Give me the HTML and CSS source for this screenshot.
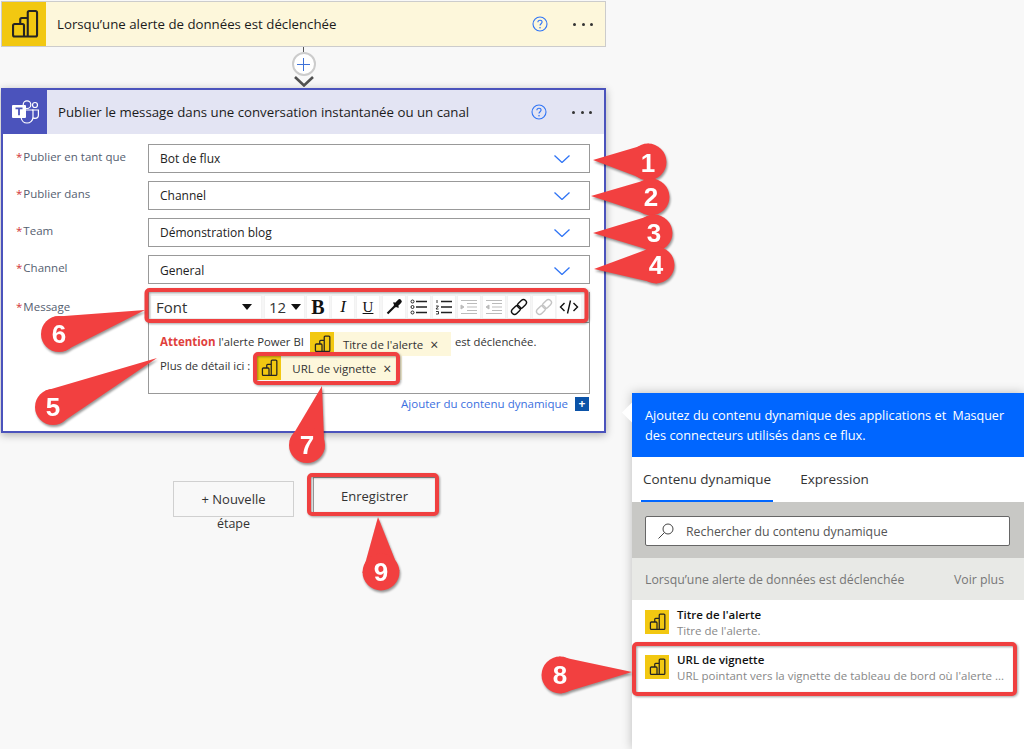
FILE: index.html
```html
<!DOCTYPE html>
<html lang="fr">
<head>
    <meta charset="UTF-8">
    <title>Flux</title>
    <link rel="stylesheet" href="styles.css">
</head>
<body>
<svg class="defs" width="0" height="0">
    <symbol id="pbi" viewBox="2 2 20 20">
        <path d="M12 20.300V13a1 1 0 0 0-1-1H5.700a1 1 0 0 0-1 1v6.300a1 1 0 0 0 1 1h14a1 1 0 0 0 1-1V4.300a1 1 0 0 0-1-1h-4.200a1 1 0 0 0-1 1V20.300M14.500 8H10.500a1 1 0 0 0-1 1V12" fill="none" stroke="#252423" stroke-width="1.400"/>
    </symbol>
    <symbol id="chev" viewBox="0 0 16 8">
        <path d="M.5.5 8 7.500 15.500.5" fill="none" stroke="#2f74f5" stroke-width="1.300"/>
    </symbol>
    <symbol id="help" viewBox="0 0 16 16">
        <circle cx="8" cy="8" r="7" fill="none" stroke="#2f74f5" stroke-width="1.100"/>
        <path d="M5.900 6.200c0-1.300 1-2 2.100-2s2.100.8 2.100 1.900c0 1.700-2.100 1.700-2.100 3.500" fill="none" stroke="#2f74f5" stroke-width="1.100"/>
        <circle cx="8" cy="11.700" r=".8" fill="#2f74f5"/>
    </symbol>
    <symbol id="chain" viewBox="0 0 18 18">
        <rect x="1" y="9" width="10" height="6" rx="3" transform="rotate(-45 6 12)"/>
        <rect x="7" y="3" width="10" height="6" rx="3" transform="rotate(-45 12 6)"/>
    </symbol>
</svg>

<div class="page">
    <!--colonne du flux-->
    <div class="flow">
        <div class="card trigger">
            <div class="card-icon"><svg class="icon-30"><use href="#pbi"/></svg></div>
            <div class="card-title">Lorsqu’une alerte de données est déclenchée</div>
            <svg class="help"><use href="#help"/></svg>
            <div class="dots"><i></i><i></i><i></i></div>
        </div>

        <div class="connector">
            <div class="line"></div>
            <div class="plus">
                <svg width="13" height="13" viewBox="0 0 13 13"><path d="M6.500 0v13M0 6.500h13" stroke="#3f72d8" stroke-width="1"/></svg>
            </div>
            <svg class="arrow" width="20" height="11" viewBox="0 0 20 11"><path d="M1 1l9 8.500L19 1" fill="none" stroke="#505050" stroke-width="2.600"/></svg>
        </div>

        <div class="card action">
            <div class="action-head">
                <div class="card-icon teams">
                    <svg width="30" height="28" viewBox="0 0 30 28" fill="none" stroke="#fff" stroke-width="1.200">
                        <circle cx="17" cy="6.700" r="3.800"/>
                        <circle cx="25" cy="7" r="2.500"/>
                        <path d="M22 12h6.400v5c0 2-1.400 3.400-3.400 3.400-.8 0-1.400-.2-2-.5"/>
                        <path d="M15 12h8v7c0 3.500-2.700 6-6 6-3 0-5.200-2-5.800-5"/>
                        <rect x="2" y="7" width="14" height="13" rx="1" fill="#fff" stroke="none"/>
                        <path d="M5.500 10.300h7M9 10.300v7" stroke="#4b53bc" stroke-width="1.800"/>
                    </svg>
                </div>
                <div class="card-title">Publier le message dans une conversation instantanée ou un canal</div>
                <svg class="help"><use href="#help"/></svg>
                <div class="dots"><i></i><i></i><i></i></div>
            </div>

            <div class="action-body">
                <div class="field">
                    <label class="field-label"><span>*</span>Publier en tant que</label>
                    <div class="select">Bot de flux<svg class="chev"><use href="#chev"/></svg></div>
                </div>
                <div class="field">
                    <label class="field-label"><span>*</span>Publier dans</label>
                    <div class="select">Channel<svg class="chev"><use href="#chev"/></svg></div>
                </div>
                <div class="field">
                    <label class="field-label"><span>*</span>Team</label>
                    <div class="select">Démonstration blog<svg class="chev"><use href="#chev"/></svg></div>
                </div>
                <div class="field">
                    <label class="field-label"><span>*</span>Channel</label>
                    <div class="select">General<svg class="chev"><use href="#chev"/></svg></div>
                </div>

                <div class="field field-message">
                    <label class="field-label"><span>*</span>Message</label>
                    <div class="rich">
                        <div class="toolbar">
                            <div class="tool tool-font">Font<b class="caret"></b></div>
                            <div class="tool tool-size">12<b class="caret"></b></div>
                            <div class="tool tool-b">B</div>
                            <div class="tool tool-i">I</div>
                            <div class="tool tool-u">U</div>
                            <div class="tool tool-dropper">
                                <svg width="18" height="18" viewBox="0 0 18 18" fill="none" stroke="#111"><path d="M2.500 15.500L10 8" stroke-width="2.200"/><path d="M11 7l3.500-3.500" stroke-width="4.500" stroke-linecap="round"/><path d="M8.500 4.500l5 5" stroke-width="1.600"/></svg>
                            </div>
                            <div class="tool">
                                <svg width="18" height="16" viewBox="0 0 18 16" fill="none" stroke="#222"><circle cx="2.500" cy="2.500" r="1.500"/><circle cx="2.500" cy="8" r="1.500"/><circle cx="2.500" cy="13.500" r="1.500"/><path d="M6 2.500h11M6 8h11M6 13.500h11" stroke-width="1.300"/></svg>
                            </div>
                            <div class="tool">
                                <svg width="18" height="16" viewBox="0 0 18 16" fill="none" stroke="#222"><path d="M2 1v3M1 7h2.500L1 10h2.500M1 12.500h2.500v2.500H1" stroke-width=".9"/><path d="M6 2.500h11M6 8h11M6 13.500h11" stroke-width="1.300"/></svg>
                            </div>
                            <div class="tool">
                                <svg width="18" height="14" viewBox="0 0 18 14" fill="none" stroke="#bbb"><path d="M1 .5h16M7 3.500h10M7 7h10M7 10.500h10M1 13.500h16"/><path d="M1 5l3 2-3 2z" fill="#bbb"/></svg>
                            </div>
                            <div class="tool">
                                <svg width="18" height="14" viewBox="0 0 18 14" fill="none" stroke="#bbb"><path d="M1 .5h16M7 3.500h10M7 7h10M7 10.500h10M1 13.500h16"/><path d="M4 5L1 7l3 2z" fill="#bbb"/></svg>
                            </div>
                            <div class="tool">
                                <svg class="chain"><use href="#chain"/></svg>
                            </div>
                            <div class="tool">
                                <svg class="chain chain-off"><use href="#chain"/></svg>
                            </div>
                            <div class="tool tool-code">
                                <svg width="20" height="16" viewBox="0 0 20 16" fill="none" stroke="#111" stroke-width="1.400"><path d="M5.500 4L1.500 8l4 4M14.500 4l4 4-4 4M11.500 1.500l-3 13"/></svg>
                            </div>
                        </div>
                        <div class="editor">
                            <div class="editor-line">
                                <strong>Attention</strong>
                                <span class="editor-text">l'alerte Power BI</span>
                                <div class="chip chip-title">
                                    <div class="chip-icon"><svg class="icon-18"><use href="#pbi"/></svg></div>
                                    <span>Titre de l'alerte</span>
                                    <em>×</em>
                                </div>
                                <span class="editor-text">est déclenchée.</span>
                            </div>
                            <div class="editor-line">
                                <span class="editor-text">Plus de détail ici :</span>
                                <div class="chip chip-url">
                                    <div class="chip-icon"><svg class="icon-18"><use href="#pbi"/></svg></div>
                                    <span>URL de vignette</span>
                                    <em>×</em>
                                </div>
                            </div>
                        </div>
                        <div class="add-dynamic">
                            <a>Ajouter du contenu dynamique</a>
                            <div class="add-btn">+</div>
                        </div>
                    </div>
                </div>
            </div>
        </div>

        <div class="actions">
            <div class="new-step">
                <button class="btn">+ Nouvelle</button>
                <div class="new-step-more">étape</div>
            </div>
            <button class="btn btn-save">Enregistrer</button>
        </div>
    </div>

    <!--panneau de contenu dynamique-->
    <div class="panel">
        <div class="panel-arrow"></div>
        <div class="panel-head">
            <p>Ajoutez du contenu dynamique des applications et des connecteurs utilisés dans ce flux.</p>
            <a>Masquer</a>
        </div>
        <div class="tabs">
            <div class="tab current">Contenu dynamique</div>
            <div class="tab">Expression</div>
        </div>
        <div class="search-wrap">
            <div class="search">
                <svg width="18" height="18" viewBox="0 0 18 18" fill="none" stroke="#444" stroke-width="1"><circle cx="11" cy="7" r="5"/><path d="M7.500 10.500L1.500 16.500"/></svg>
                <span>Rechercher du contenu dynamique</span>
            </div>
        </div>
        <div class="section">
            <span>Lorsqu’une alerte de données est déclenchée</span>
            <a>Voir plus</a>
        </div>
        <div class="items">
            <div class="item">
                <div class="item-icon"><svg class="icon-18"><use href="#pbi"/></svg></div>
                <div class="item-text">
                    <div class="item-name">Titre de l'alerte</div>
                    <div class="item-desc">Titre de l'alerte.</div>
                </div>
            </div>
            <div class="item">
                <div class="item-icon"><svg class="icon-18"><use href="#pbi"/></svg></div>
                <div class="item-text">
                    <div class="item-name">URL de vignette</div>
                    <div class="item-desc">URL pointant vers la vignette de tableau de bord où l'alerte ...</div>
                </div>
            </div>
        </div>
    </div>
</div>

<!--annotations rouges par-dessus la capture-->
<svg class="marks" width="1024" height="749" viewBox="0 0 1024 749">
    <g class="mark-box">
        <rect x="146.500" y="290" width="440" height="31" rx="3"/>
        <rect x="255" y="354" width="143" height="29" rx="3"/>
        <rect x="309" y="475" width="128" height="39" rx="3"/>
        <rect x="634" y="644" width="381" height="50" rx="3"/>
    </g>
    <g class="callout"><polygon points="593,160 648.700,143.500 647.300,180.500"/><circle cx="648" cy="162" r="18.500"/><text x="648" y="172">1</text></g>
    <g class="callout"><polygon points="591,196 651,178.500 651,215.500"/><circle cx="651" cy="197" r="18.500"/><text x="651" y="206">2</text></g>
    <g class="callout"><polygon points="593,233 654,214.500 654,251.500"/><circle cx="654" cy="233" r="18.500"/><text x="654" y="242">3</text></g>
    <g class="callout"><polygon points="594,269 654.800,246.500 657.200,283.500"/><circle cx="656" cy="265" r="18.500"/><text x="656" y="274">4</text></g>
    <g class="callout"><polygon points="157,358 45.300,390.700 60.700,423.300"/><circle cx="53" cy="407" r="18"/><text x="53" y="416">5</text></g>
    <g class="callout"><polygon points="145,310 54.200,316.700 63.800,351.300"/><circle cx="59" cy="334" r="18"/><text x="59" y="343">6</text></g>
    <g class="callout"><polygon points="322,386 289.600,440.600 324.400,449.400"/><circle cx="307" cy="445" r="18"/><text x="307" y="454">7</text></g>
    <g class="callout"><polygon points="632,672 559.200,656.500 560.800,693.500"/><circle cx="560" cy="675" r="18.500"/><text x="560" y="684">8</text></g>
    <g class="callout"><polygon points="378,517 362.500,573 399.500,571"/><circle cx="381" cy="572" r="18.500"/><text x="381" y="581">9</text></g>
</svg>
</body>
</html>
```

FILE: styles.css
```css
* {
    padding: 0;
    margin: 0;
    box-sizing: border-box;
}

html, body {
    height: 749px;
    overflow: hidden;
}

body {
    position: relative;
    background: #f8f8f8;
    font-family: "Open Sans", "Liberation Sans", sans-serif;
    font-size: 12px;
    color: #222;
}

.defs {
    position: absolute;
}

.page {
    display: flex;
    align-items: flex-start;
    padding: 1px 0 0 1px;
}

.flow {
    width: 605px;
    flex: none;
}

.card {
    display: flex;
    align-items: center;
}

.card-icon {
    width: 44px;
    flex: none;
    align-self: stretch;
    display: flex;
    align-items: center;
    justify-content: center;
    background: #f2c811;
}

.icon-30 {
    width: 30px;
    height: 30px;
}

.icon-18 {
    width: 18px;
    height: 18px;
}

.card-title {
    flex: 1;
    padding-left: 11px;
    font-size: 13.250px;
    color: #1b1b1b;
}

.help {
    width: 16px;
    height: 16px;
    margin-right: 25px;
}

.dots {
    display: flex;
    gap: 5.500px;
    margin-right: 12px;
}

.dots i {
    width: 3px;
    height: 3px;
    border-radius: 50%;
    background: #333;
}

.trigger {
    height: 46px;
    background: #fdf7db;
    border: 1px solid #ccc;
}

.connector {
    height: 41px;
    display: flex;
    flex-direction: column;
    align-items: center;
}

.line {
    width: 1px;
    height: 5px;
    background: #555;
}

.plus {
    width: 24px;
    height: 24px;
    border: 2px solid #ccc;
    border-radius: 50%;
    background: #fff;
    display: flex;
    align-items: center;
    justify-content: center;
}

.arrow {
    position: relative;
    z-index: 1;
    flex: none;
}

.action {
    display: block;
    height: 345px;
    background: #fff;
    border: 2px solid #4b53bc;
    box-shadow: 0 2px 8px rgba(0, 0, 0, 0.3);
}

.action-head {
    height: 44px;
    display: flex;
    align-items: center;
    background: #e3e4f3;
}

.teams {
    background: #4b53bc;
}

.action-body {
    padding: 10px 14px 0 13px;
}

.field {
    display: flex;
    margin-bottom: 8px;
}

.field-label {
    width: 132px;
    flex: none;
    padding-top: 5px;
    font-size: 11.500px;
    color: #556070;
}

.field-label span {
    color: #d13438;
    margin-right: 1px;
}

.select {
    flex: 1;
    height: 29px;
    display: flex;
    align-items: center;
    justify-content: space-between;
    padding: 0 19px 0 11px;
    border: 1px solid #999;
    font-size: 12px;
    color: #222;
}

.field:nth-child(4) .select {
    padding-top: 2px;
}

.chev {
    width: 16px;
    height: 8px;
}

.field-message {
    margin-bottom: 0;
}

.field-message .field-label {
    padding-top: 7px;
}

.rich {
    flex: 1;
}

.toolbar {
    height: 30px;
    display: flex;
    align-items: center;
    gap: 1px;
    padding: 0 0 0 1px;
    background: #f6f6f6;
    border-left: 1px solid #999;
    border-right: 1px solid #999;
}

.tool {
    width: 24px;
    height: 24px;
    flex: none;
    display: flex;
    align-items: center;
    justify-content: center;
    background: #fff;
    border: 1px solid #f2f2f2;
    font-size: 14px;
    color: #111;
}

.tool-font {
    width: 112px;
    justify-content: space-between;
    padding: 0 9px 0 5px;
    margin-right: 1px;
    font-size: 15px;
    color: #333;
}

.tool-size {
    width: 41px;
    justify-content: space-between;
    padding: 0 3px 0 4px;
    font-size: 15px;
    color: #333;
}

.caret {
    width: 0;
    height: 0;
    border-left: 5px solid transparent;
    border-right: 5px solid transparent;
    border-top: 6px solid #111;
}

.tool-b {
    font-family: "Liberation Serif", serif;
    font-weight: bold;
    font-size: 20px;
}

.tool-i {
    font-family: "Liberation Serif", serif;
    font-style: italic;
    font-size: 17px;
}

.tool-u {
    font-family: "Liberation Serif", serif;
    font-size: 15px;
    text-decoration: underline;
}

.tool-dropper {
    margin-left: 1px;
}

.tool-code {
    border-color: #fff;
}

.chain {
    width: 18px;
    height: 18px;
    fill: none;
    stroke: #111;
    stroke-width: 1.400;
}

.chain-off {
    stroke: #c4c4c4;
}

.editor {
    height: 72px;
    padding: 9px 0 0 11px;
    border: 1px solid #999;
}

.editor-line {
    display: flex;
    align-items: flex-start;
    height: 24px;
}

.editor strong {
    padding-top: 2px;
    font-size: 11.500px;
    font-weight: 700;
    color: #e0403c;
    margin-right: 3px;
}

.editor-text {
    padding-top: 2px;
    font-size: 11.300px;
    color: #333;
}

.chip {
    height: 24px;
    display: flex;
    align-items: center;
    background: #fdf7db;
    font-size: 11.500px;
    color: #333;
}

.chip-icon {
    width: 24px;
    height: 24px;
    display: flex;
    align-items: center;
    justify-content: center;
    background: #f2c811;
}

.chip em {
    font-style: normal;
    font-size: 14px;
    margin-left: 7px;
}

.chip-title {
    width: 141px;
    margin: 0 4px 0 6px;
}

.chip-title span {
    padding-left: 9px;
}

.chip-url {
    width: 145px;
    margin-left: 7px;
}

.chip-url span {
    padding-left: 11px;
}

.add-dynamic {
    display: flex;
    justify-content: flex-end;
    align-items: center;
    gap: 7px;
    padding: 2px 1px 0 0;
    font-size: 11.500px;
    color: #3b6fe0;
}

.add-btn {
    width: 14px;
    height: 14px;
    background: #0b53a8;
    color: #fff;
    font-size: 12px;
    font-weight: bold;
    line-height: 13px;
    text-align: center;
}

.actions {
    display: flex;
    align-items: flex-start;
    gap: 19px;
    padding: 44px 0 0 172px;
}

.new-step {
    width: 121px;
    margin-top: 4px;
    text-align: center;
    color: #333;
    font-size: 12.500px;
}

.btn {
    display: block;
    width: 121px;
    height: 36px;
    background: #f8f8f8;
    border: 1px solid #d0d0d0;
    font-family: inherit;
    font-size: 13px;
    color: #333;
}

.new-step-more {
    line-height: 13px;
}

.btn-save {
    width: 123px;
    height: 38px;
    border: 1px solid #999;
}

/* panneau de droite */
.panel {
    position: relative;
    width: 392px;
    height: 356px;
    flex: none;
    margin: 392px 0 0 26px;
    background: #fff;
    box-shadow: 0 0 10px rgba(0, 0, 0, 0.25);
}

.panel-arrow {
    position: absolute;
    left: -7px;
    top: 12px;
    width: 15px;
    height: 15px;
    background: #fff;
    transform: rotate(45deg);
}

.panel-head {
    position: relative;
    height: 64px;
    display: flex;
    justify-content: space-between;
    padding: 12px 20px 0 13px;
    background: #0066ff;
    color: #fff;
    font-size: 12.800px;
    line-height: 20px;
}

.panel-head p {
    width: 306px;
}

.panel-head a {
    font-size: 12.500px;
    margin-top: 1px;
}

.tabs {
    height: 45px;
    display: flex;
    gap: 25px;
    padding-left: 9px;
}

.tab {
    height: 45px;
    padding: 13px 2px 0;
    font-size: 13.500px;
    color: #333;
}

.tab.current {
    border-bottom: 2px solid #0066ff;
}

.search-wrap {
    height: 56px;
    padding: 14px 14px 0 13px;
    background: #c8c8c5;
}

.search {
    height: 30px;
    display: flex;
    align-items: center;
    gap: 11px;
    padding-left: 11px;
    background: #fff;
    border: 1px solid #666;
    border-radius: 2px;
    font-size: 12.300px;
    color: #555;
}

.section {
    height: 42px;
    display: flex;
    align-items: center;
    justify-content: space-between;
    padding: 0 20px 0 13px;
    background: #e8e9e6;
    font-size: 12.300px;
    color: #777;
}

.items {
    padding-top: 10px;
}

.item {
    height: 45px;
    display: flex;
    gap: 8px;
    padding-left: 13px;
}

.item-icon {
    width: 24px;
    height: 24px;
    flex: none;
    display: flex;
    align-items: center;
    justify-content: center;
    background: #f2c811;
}

.item-text {
    margin-top: -3px;
    line-height: 16px;
    font-size: 11.500px;
}

.item-name {
    font-weight: 600;
    color: #111;
}

.item-desc {
    color: #888;
}

/* annotations */
.marks {
    position: absolute;
    left: 0;
    top: 0;
}

.mark-box rect {
    fill: none;
    stroke: #f04040;
    stroke-width: 4;
    filter: drop-shadow(1px 1px 1px rgba(0, 0, 0, 0.35));
}

.callout {
    fill: #f24040;
    filter: drop-shadow(1px 2px 1px rgba(0, 0, 0, 0.4));
}

.callout text {
    fill: #fff;
    font-family: "Liberation Sans", sans-serif;
    font-weight: bold;
    font-size: 26px;
    text-anchor: middle;
}
```
